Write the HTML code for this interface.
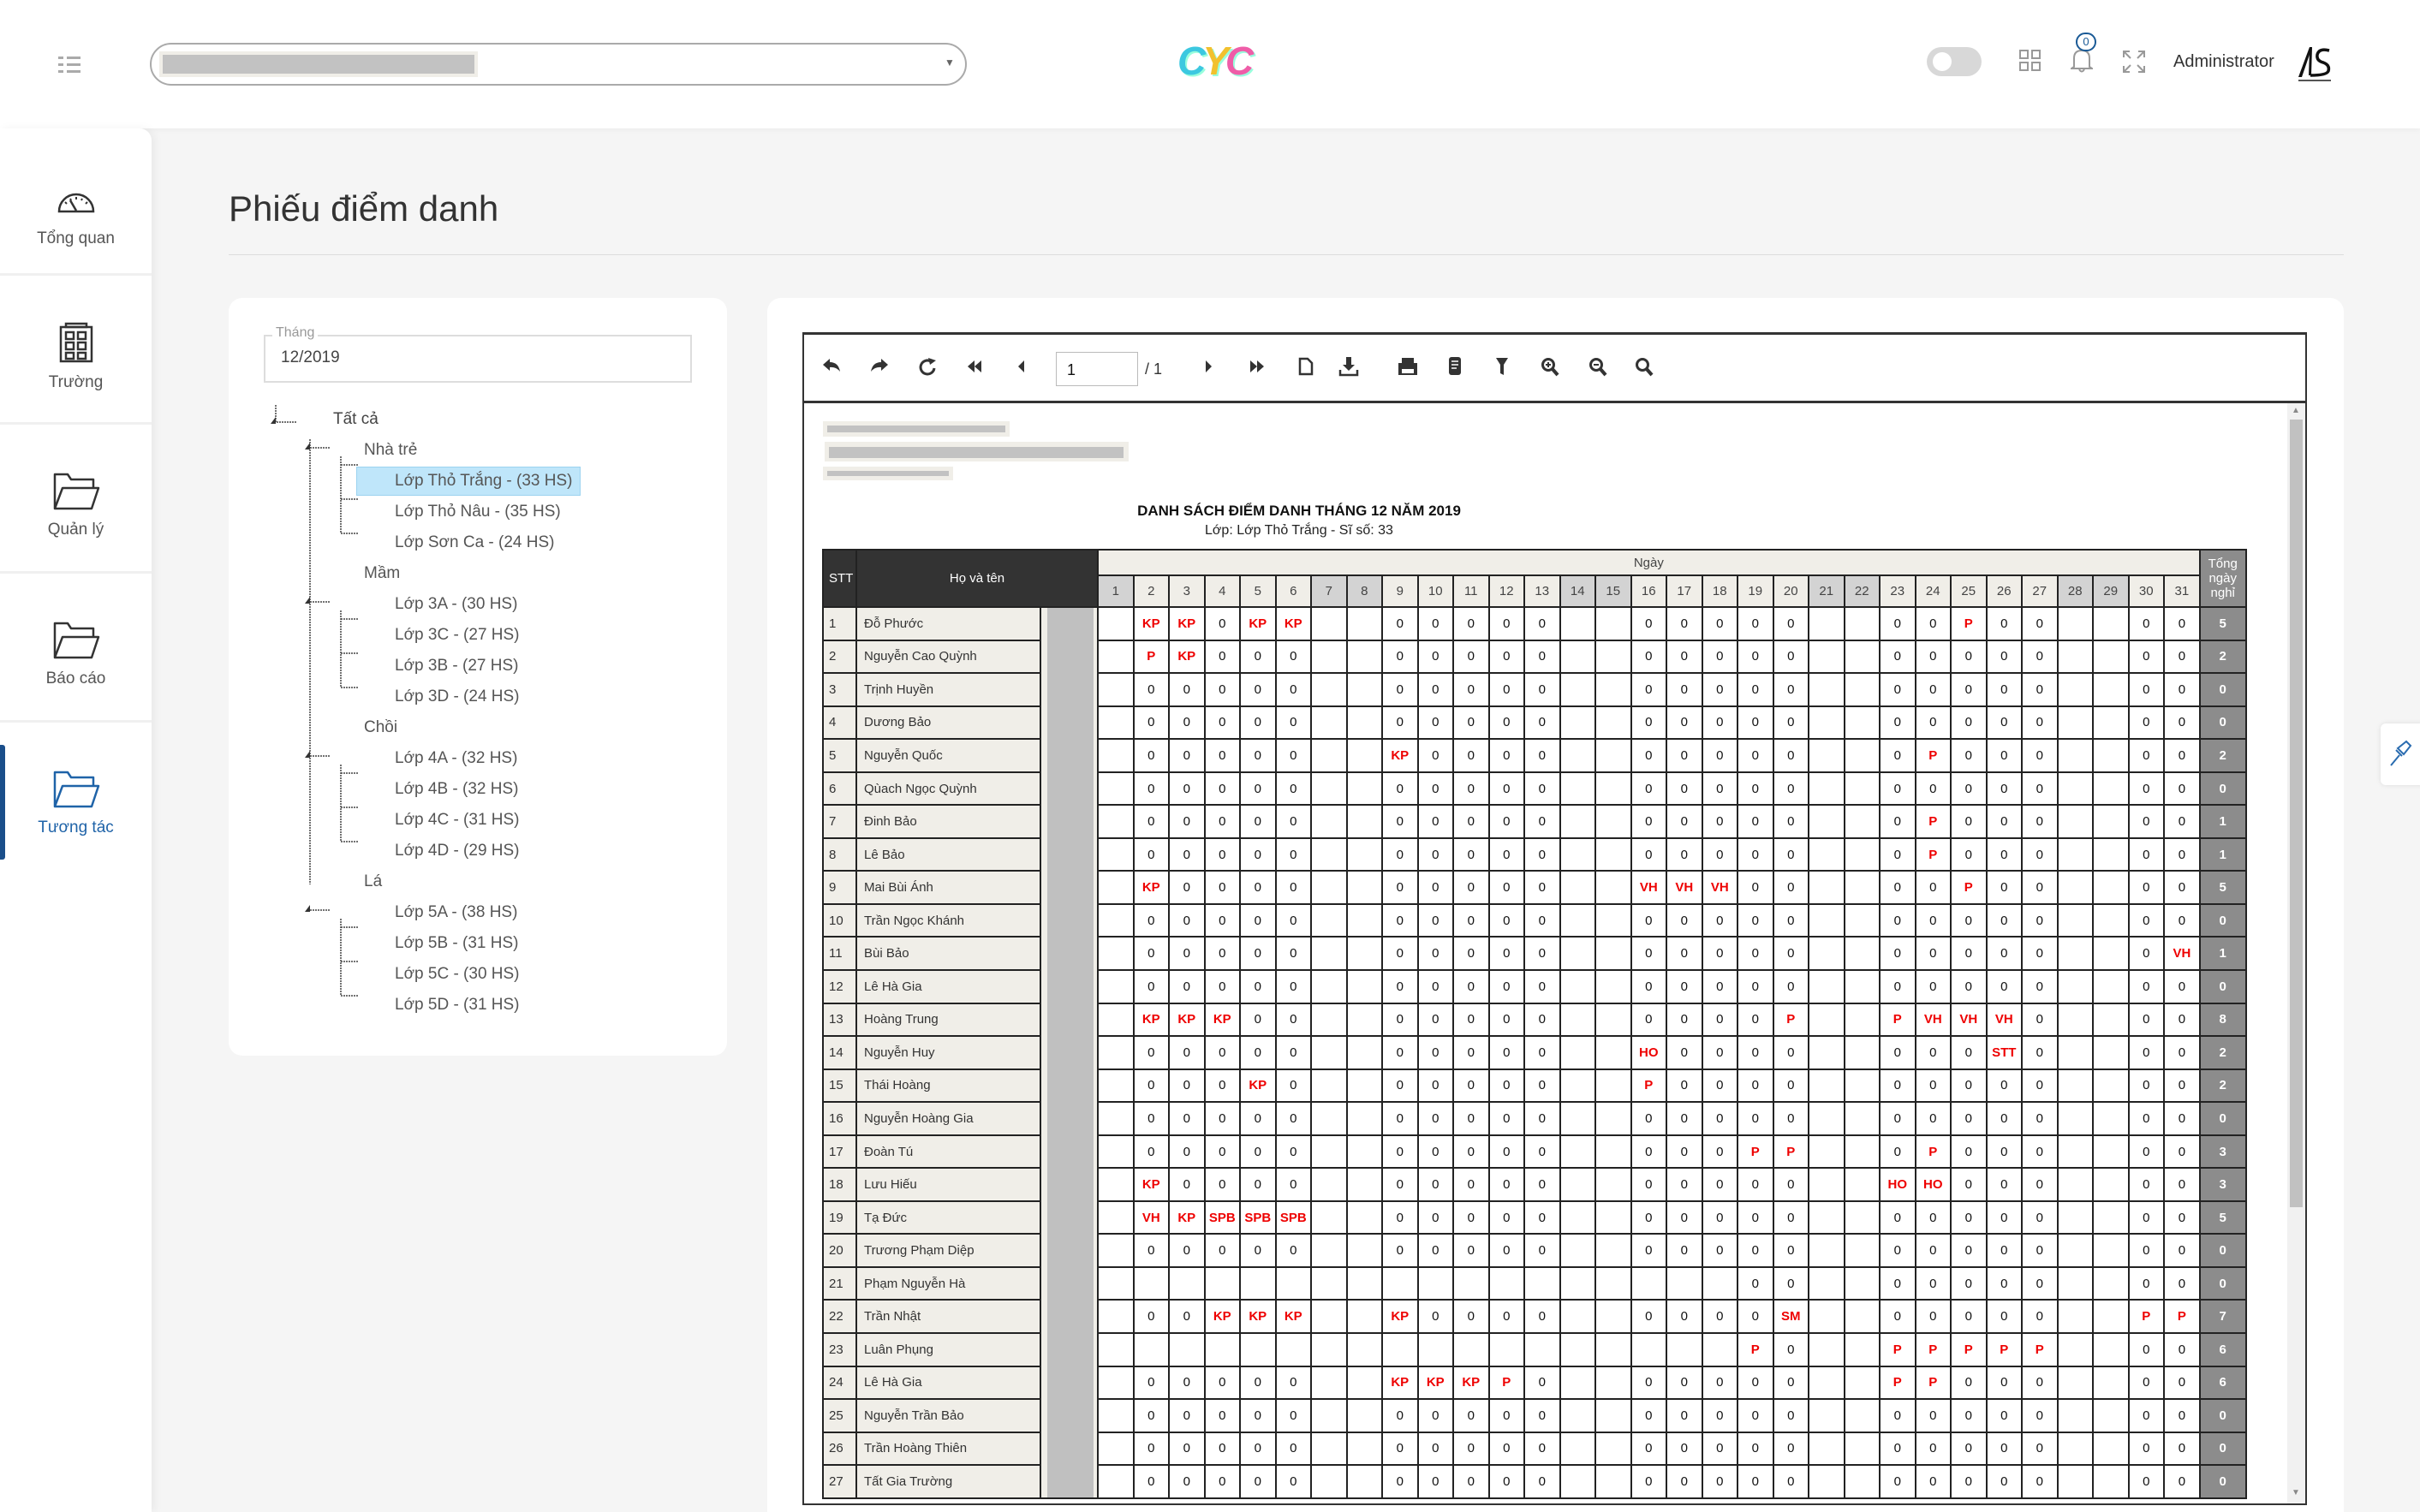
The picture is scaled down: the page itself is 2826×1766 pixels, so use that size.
<!DOCTYPE html>
<html><head><meta charset="utf-8">
<style>
*{box-sizing:border-box;margin:0;padding:0}
html,body{width:2826px;height:1766px;overflow:hidden;background:#f5f5f5;font-family:"Liberation Sans",sans-serif;position:relative}
.abs{position:absolute}
#hdr{left:0;top:0;width:2826px;height:150px;background:#fff;box-shadow:0 2px 6px rgba(0,0,0,.04)}
#side{left:0;top:150px;width:177px;height:1616px;background:#fff;border-top-right-radius:14px;box-shadow:4px 0 10px rgba(0,0,0,.05)}
.si{position:absolute;left:0;width:177px;height:172px;border-bottom:3px solid #f0f0f0;text-align:center;color:#555;font-size:19px}
.si svg{display:block;margin:0 auto}
.title{left:267px;top:220px;font-size:42px;color:#333}
.card{background:#fff;border-radius:16px}
.tree div{position:absolute;font-size:19px;color:#555;white-space:nowrap}
table{border-collapse:collapse;table-layout:fixed;font-family:"Liberation Sans Narrow","Liberation Sans",sans-serif;font-size:15px;color:#111}
td{border:2px solid #222;text-align:center;height:38.55px;padding:0;overflow:hidden;white-space:nowrap}
td.s{background:#f0eee8;text-align:left;padding-left:6px;color:#333}
td.n{background:#f0eee8;text-align:left;padding-left:8px;color:#333}
td.sp{background:linear-gradient(to right,#f0eee8 7px,#c0c0c0 7px,#c0c0c0 61px,#f0eee8 61px);border-top:2px solid #222}
td.r{color:#e00;font-weight:bold}
td.t{background:#8c8c8c;color:#fff;font-weight:bold}
tr.h td{background:#333;color:#fff;height:30px}
td.ng{background:#f0eee8!important;color:#444!important}
tr.d td{height:37px;background:#f0eee8;color:#444}
tr.d td.w{background:#d3d3d3}
</style></head><body>

<div id="hdr" class="abs">
  <svg class="abs" style="left:68px;top:66px" width="36" height="20"><g fill="#aaa"><rect x="0" y="0" width="6" height="3"/><rect x="10" y="0" width="16" height="3"/><rect x="0" y="8" width="6" height="3"/><rect x="10" y="8" width="16" height="3"/><rect x="0" y="16" width="6" height="3"/><rect x="10" y="16" width="16" height="3"/></g></svg>
  <div class="abs" style="left:175px;top:50px;width:954px;height:50px;border:2px solid #aaa;border-radius:25px"></div>
  <div class="abs" style="left:186px;top:60px;width:372px;height:30px;background:#f0eee8"></div>
  <div class="abs" style="left:190px;top:64px;width:364px;height:22px;background:#c2c2c2"></div>
  <div class="abs" style="left:1103px;top:66px;font-size:12px;color:#666">▼</div>
  <div class="abs" style="left:1375px;top:44px;font-size:46px;font-weight:bold;font-style:italic;letter-spacing:-4px;text-shadow:2px 2px 0 #9fd"><span style="color:#3cc8e0">C</span><span style="color:#f2c12e">Y</span><span style="color:#ef5da8">C</span></div>
  <div class="abs" style="left:2250px;top:55px;width:64px;height:34px;border-radius:17px;background:#d8d8d8"></div>
  <div class="abs" style="left:2257px;top:61px;width:22px;height:22px;border-radius:11px;background:#fff"></div>
  <svg class="abs" style="left:2358px;top:58px" width="26" height="26"><g fill="none" stroke="#999" stroke-width="2"><rect x="1" y="1" width="9" height="9"/><rect x="15" y="1" width="9" height="9"/><rect x="1" y="15" width="9" height="9"/><rect x="15" y="15" width="9" height="9"/></g></svg>
  <svg class="abs" style="left:2418px;top:56px" width="26" height="30"><path d="M4 22 L4 12 Q4 3 13 3 Q22 3 22 12 L22 22 L25 24 L1 24 Z M10 25 Q13 30 16 25" fill="none" stroke="#999" stroke-width="2"/></svg>
  <div class="abs" style="left:2424px;top:38px;width:24px;height:22px;border:2px solid #1a5a96;border-radius:11px;background:#fff;font-size:13px;color:#1a5a96;text-align:center;line-height:18px">0</div>
  <svg class="abs" style="left:2478px;top:58px" width="28" height="28"><g fill="none" stroke="#999" stroke-width="2"><path d="M2 9V2H9M2 2L10 10M19 2H26V9M26 2L18 10M2 19V26H9M2 26L10 18M26 19V26H19M26 26L18 18"/></g></svg>
  <div class="abs" style="left:2538px;top:61px;font-size:20px;color:#333">Administrator</div>
  <svg class="abs" style="left:2682px;top:52px" width="46" height="46">
    <path d="M2 38 L15 3 L18 3 L6 38Z" fill="#111"/>
    <path d="M18 3 L18 3 L17 36 L14 36 L15 6Z" fill="#111"/>
    <path d="M38 7 Q26 4 24 12 Q23 19 31 21 Q39 24 37 31 Q35 36 16 36" fill="none" stroke="#111" stroke-width="3.5"/>
    <rect x="2" y="41" width="38" height="2" fill="#555"/>
  </svg>
</div>

<div id="side" class="abs">
  <div class="si" style="top:0"><svg style="margin-top:72px" width="46" height="28"><path d="M3 25 A20 20 0 0 1 43 25 Z" fill="none" stroke="#333" stroke-width="2.5"/><path d="M23 24 L16 12" stroke="#333" stroke-width="2.5"/><g stroke="#333" stroke-width="2"><path d="M10 14L12 16M23 8V11M36 14L34 16M16 10L17 12M30 10L29 12"/></g></svg><div style="margin-top:18px">Tổng quan</div></div>
  <div class="si" style="top:174px"><svg style="margin-top:52px" width="40" height="48"><g fill="none" stroke="#333" stroke-width="2.5"><rect x="2" y="6" width="36" height="40"/><rect x="8" y="2" width="24" height="4"/><rect x="8" y="12" width="9" height="8"/><rect x="22" y="12" width="9" height="8"/><rect x="8" y="24" width="9" height="8"/><rect x="22" y="24" width="9" height="8"/><rect x="8" y="36" width="9" height="7"/><rect x="22" y="36" width="9" height="7"/></g></svg><div style="margin-top:12px">Trường</div></div>
  <div class="si" style="top:348px"><svg style="margin-top:50px" width="56" height="50"><path d="M3 46 V6 H18 L22 12 H48 V22 M3 46 L12 22 H54 L46 46 Z" fill="none" stroke="#333" stroke-width="2.5" stroke-linejoin="round"/></svg><div style="margin-top:10px">Quản lý</div></div>
  <div class="si" style="top:522px"><svg style="margin-top:50px" width="56" height="50"><path d="M3 46 V6 H18 L22 12 H48 V22 M3 46 L12 22 H54 L46 46 Z" fill="none" stroke="#333" stroke-width="2.5" stroke-linejoin="round"/></svg><div style="margin-top:10px">Báo cáo</div></div>
  <div class="si" style="top:696px;color:#1f63a8;border:none"><svg style="margin-top:50px" width="56" height="50"><path d="M3 46 V6 H18 L22 12 H48 V22 M3 46 L12 22 H54 L46 46 Z" fill="none" stroke="#1f63a8" stroke-width="2.5" stroke-linejoin="round"/></svg><div style="margin-top:10px">Tương tác</div></div>
  <div class="abs" style="left:0;top:720px;width:6px;height:134px;background:#1a4e8a;border-radius:0 3px 3px 0"></div>
</div>

<div class="abs title">Phiếu điểm danh</div>
<div class="abs" style="left:267px;top:297px;width:2470px;height:1px;background:#ddd"></div>

<div class="abs card" style="left:267px;top:348px;width:582px;height:885px"></div>
<div class="abs" style="left:308px;top:391px;width:500px;height:56px;border:2px solid #ddd"></div>
<div class="abs" style="left:318px;top:380px;background:#fff;padding:0 4px;font-size:16px;color:#999">Tháng</div>
<div class="abs" style="left:328px;top:407px;font-size:19px;color:#444">12/2019</div>

<div class="tree">
  <div style="left:389px;top:479px;color:#444">Tất cả</div>
  <div style="left:425px;top:515px">Nhà trẻ</div>
  <div style="left:416px;top:545px;width:262px;height:34px;background:#bfe6fa;border:1px solid #9cd3f0"></div>
  <div style="left:461px;top:551px">Lớp Thỏ Trắng - (33 HS)</div>
  <div style="left:461px;top:587px">Lớp Thỏ Nâu - (35 HS)</div>
  <div style="left:461px;top:623px">Lớp Sơn Ca - (24 HS)</div>
  <div style="left:425px;top:659px">Mầm</div>
  <div style="left:461px;top:695px">Lớp 3A - (30 HS)</div>
  <div style="left:461px;top:731px">Lớp 3C - (27 HS)</div>
  <div style="left:461px;top:767px">Lớp 3B - (27 HS)</div>
  <div style="left:461px;top:803px">Lớp 3D - (24 HS)</div>
  <div style="left:425px;top:839px">Chồi</div>
  <div style="left:461px;top:875px">Lớp 4A - (32 HS)</div>
  <div style="left:461px;top:911px">Lớp 4B - (32 HS)</div>
  <div style="left:461px;top:947px">Lớp 4C - (31 HS)</div>
  <div style="left:461px;top:983px">Lớp 4D - (29 HS)</div>
  <div style="left:425px;top:1019px">Lá</div>
  <div style="left:461px;top:1055px">Lớp 5A - (38 HS)</div>
  <div style="left:461px;top:1091px">Lớp 5B - (31 HS)</div>
  <div style="left:461px;top:1127px">Lớp 5C - (30 HS)</div>
  <div style="left:461px;top:1163px">Lớp 5D - (31 HS)</div>
</div>
<svg class="abs" style="left:310px;top:473px" width="200" height="720">
  <g stroke="#444" stroke-width="1.5" stroke-dasharray="2 1" fill="none">
    <path d="M12 0V20H36"/>
    <path d="M52 40V560"/>
    <path d="M52 50H76M52 230H76M52 410H76M52 590H76"/>
    <path d="M88 60V150M88 70H108M88 110H108M88 150H108"/>
    <path d="M88 240V330M88 250H108M88 290H108M88 330H108"/>
    <path d="M88 420V510M88 430H108M88 470H108M88 510H108"/>
    <path d="M88 600V690M88 610H108M88 650H108M88 690H108"/>
  </g>
  <g fill="#333"><path d="M6 22L12 14L12 22Z"/><path d="M46 52L52 44L52 52Z"/><path d="M46 232L52 224L52 232Z"/><path d="M46 412L52 404L52 412Z"/><path d="M46 592L52 584L52 592Z"/></g>
</svg>

<div class="abs card" style="left:896px;top:348px;width:1841px;height:1440px"></div>
<div class="abs" style="left:937px;top:388px;width:1757px;height:1370px;border-left:2px solid #333;border-right:2px solid #333;border-bottom:2px solid #333"></div>
<div class="abs" style="left:937px;top:388px;width:1757px;height:3px;background:#333"></div>
<div class="abs" style="left:937px;top:468px;width:1757px;height:3px;background:#333"></div>
<div class="abs" style="left:2671px;top:471px;width:21px;height:1285px;background:#f1f1f1"></div>
<div class="abs" style="left:2674px;top:490px;width:15px;height:920px;background:#c1c1c1"></div>
<div class="abs" style="left:2676px;top:474px;font-size:10px;color:#888">▲</div>
<div class="abs" style="left:2676px;top:1738px;font-size:10px;color:#888">▼</div>

<svg class="abs" style="left:955px;top:412px" width="1000" height="34">
 <g fill="#333">
  <path d="M6 14 L14 7 V11 Q24 11 26 22 Q21 16 14 17 V21Z"/>
  <path d="M82 14 L74 7 V11 Q64 11 62 22 Q67 16 74 17 V21Z"/>
  <path d="M132 10 A8 8 0 1 0 136 18" fill="none" stroke="#333" stroke-width="3"/><path d="M129 6 L138 9 L131 14Z"/>
  <path d="M175 16 L183 9 V23Z M183 16 L191 9 V23Z"/>
  <path d="M234 16 L241 9 V23Z"/>
  <path d="M453 9 L460 16 L453 23Z"/>
  <path d="M505 9 L513 16 L505 23Z M513 9 L521 16 L513 23Z"/>
  <path d="M563 7 H572 L577 12 V25 H563Z" fill="none" stroke="#333" stroke-width="2.5"/>
  <path d="M617 5 H623 V14 H627 L620 21 L613 14 H617Z"/><path d="M610 20V26H630V20" fill="none" stroke="#333" stroke-width="2.5"/>
  <path d="M682 12 V6 H696 V12 H700 V26 H678 V12Z M682 19 H696 V24 H682Z" fill-rule="evenodd"/>
  <rect x="737" y="5" width="14" height="21" rx="3"/><path d="M740 10H748M740 14H748M740 18H746" stroke="#fff" stroke-width="1.5"/>
  <path d="M792 6 H806 L801 14 V26 L797 24 V14Z"/>
  <circle cx="853" cy="14" r="6.5" fill="none" stroke="#333" stroke-width="3"/><path d="M857 18 L864 26" stroke="#333" stroke-width="4"/><path d="M850 14H856M853 11V17" stroke="#333" stroke-width="2"/>
  <circle cx="909" cy="14" r="6.5" fill="none" stroke="#333" stroke-width="3"/><path d="M913 18 L920 26" stroke="#333" stroke-width="4"/><path d="M906 14H912" stroke="#333" stroke-width="2"/>
  <circle cx="963" cy="14" r="6.5" fill="none" stroke="#333" stroke-width="3"/><path d="M967 18 L974 26" stroke="#333" stroke-width="4"/>
 </g>
</svg>
<div class="abs" style="left:1233px;top:411px;width:96px;height:40px;border:1px solid #bbb;background:#fff;font-size:18px;padding:10px 0 0 12px;color:#111">1</div>
<div class="abs" style="left:1337px;top:421px;font-size:18px;color:#333">/ 1</div>

<div class="abs" style="left:961px;top:492px;width:218px;height:18px;background:#f0eee8"></div>
<div class="abs" style="left:966px;top:497px;width:208px;height:8px;background:#c2c2c2"></div>
<div class="abs" style="left:963px;top:516px;width:355px;height:23px;background:#f0eee8"></div>
<div class="abs" style="left:968px;top:522px;width:344px;height:13px;background:#c2c2c2"></div>
<div class="abs" style="left:961px;top:545px;width:152px;height:16px;background:#f0eee8"></div>
<div class="abs" style="left:966px;top:550px;width:142px;height:6px;background:#c2c2c2"></div>

<div class="abs" style="left:1200px;top:587px;width:634px;text-align:center;font-family:'Liberation Sans Narrow','Liberation Sans',sans-serif;font-size:17px;font-weight:bold;color:#111">DANH SÁCH ĐIỂM DANH THÁNG 12 NĂM 2019</div>
<div class="abs" style="left:1200px;top:611px;width:634px;text-align:center;font-family:'Liberation Sans Narrow','Liberation Sans',sans-serif;font-size:16px;color:#222">Lớp: Lớp Thỏ Trắng - Sĩ số: 33</div>

<table class="abs" style="left:960px;top:641px;width:1662px">
<colgroup><col style="width:39px"><col style="width:215px"><col style="width:67px">
<col span="31" style="width:41.5px"><col style="width:54px"></colgroup>
<tr class="h"><td rowspan="2" style="text-align:left;padding-left:6px">STT<td colspan="2" rowspan="2">Họ và tên<td colspan="31" class="ng">Ngày<td rowspan="2" style="background:#8c8c8c;line-height:17px;white-space:normal">Tổng ngày nghỉ</tr>
<tr class="d"><td class="w">1<td>2<td>3<td>4<td>5<td>6<td class="w">7<td class="w">8<td>9<td>10<td>11<td>12<td>13<td class="w">14<td class="w">15<td>16<td>17<td>18<td>19<td>20<td class="w">21<td class="w">22<td>23<td>24<td>25<td>26<td>27<td class="w">28<td class="w">29<td>30<td>31</tr>
<tr><td class="s">1<td class="n">Đỗ Phước<td class="sp" rowspan="27"><td><td class="r">KP<td class="r">KP<td>0<td class="r">KP<td class="r">KP<td><td><td>0<td>0<td>0<td>0<td>0<td><td><td>0<td>0<td>0<td>0<td>0<td><td><td>0<td>0<td class="r">P<td>0<td>0<td><td><td>0<td>0<td class="t">5</tr>
<tr><td class="s">2<td class="n">Nguyễn Cao Quỳnh<td><td class="r">P<td class="r">KP<td>0<td>0<td>0<td><td><td>0<td>0<td>0<td>0<td>0<td><td><td>0<td>0<td>0<td>0<td>0<td><td><td>0<td>0<td>0<td>0<td>0<td><td><td>0<td>0<td class="t">2</tr>
<tr><td class="s">3<td class="n">Trịnh Huyền<td><td>0<td>0<td>0<td>0<td>0<td><td><td>0<td>0<td>0<td>0<td>0<td><td><td>0<td>0<td>0<td>0<td>0<td><td><td>0<td>0<td>0<td>0<td>0<td><td><td>0<td>0<td class="t">0</tr>
<tr><td class="s">4<td class="n">Dương Bảo<td><td>0<td>0<td>0<td>0<td>0<td><td><td>0<td>0<td>0<td>0<td>0<td><td><td>0<td>0<td>0<td>0<td>0<td><td><td>0<td>0<td>0<td>0<td>0<td><td><td>0<td>0<td class="t">0</tr>
<tr><td class="s">5<td class="n">Nguyễn Quốc<td><td>0<td>0<td>0<td>0<td>0<td><td><td class="r">KP<td>0<td>0<td>0<td>0<td><td><td>0<td>0<td>0<td>0<td>0<td><td><td>0<td class="r">P<td>0<td>0<td>0<td><td><td>0<td>0<td class="t">2</tr>
<tr><td class="s">6<td class="n">Qùach Ngọc Quỳnh<td><td>0<td>0<td>0<td>0<td>0<td><td><td>0<td>0<td>0<td>0<td>0<td><td><td>0<td>0<td>0<td>0<td>0<td><td><td>0<td>0<td>0<td>0<td>0<td><td><td>0<td>0<td class="t">0</tr>
<tr><td class="s">7<td class="n">Đinh Bảo<td><td>0<td>0<td>0<td>0<td>0<td><td><td>0<td>0<td>0<td>0<td>0<td><td><td>0<td>0<td>0<td>0<td>0<td><td><td>0<td class="r">P<td>0<td>0<td>0<td><td><td>0<td>0<td class="t">1</tr>
<tr><td class="s">8<td class="n">Lê Bảo<td><td>0<td>0<td>0<td>0<td>0<td><td><td>0<td>0<td>0<td>0<td>0<td><td><td>0<td>0<td>0<td>0<td>0<td><td><td>0<td class="r">P<td>0<td>0<td>0<td><td><td>0<td>0<td class="t">1</tr>
<tr><td class="s">9<td class="n">Mai Bùi Ánh<td><td class="r">KP<td>0<td>0<td>0<td>0<td><td><td>0<td>0<td>0<td>0<td>0<td><td><td class="r">VH<td class="r">VH<td class="r">VH<td>0<td>0<td><td><td>0<td>0<td class="r">P<td>0<td>0<td><td><td>0<td>0<td class="t">5</tr>
<tr><td class="s">10<td class="n">Trần Ngọc Khánh<td><td>0<td>0<td>0<td>0<td>0<td><td><td>0<td>0<td>0<td>0<td>0<td><td><td>0<td>0<td>0<td>0<td>0<td><td><td>0<td>0<td>0<td>0<td>0<td><td><td>0<td>0<td class="t">0</tr>
<tr><td class="s">11<td class="n">Bùi Bảo<td><td>0<td>0<td>0<td>0<td>0<td><td><td>0<td>0<td>0<td>0<td>0<td><td><td>0<td>0<td>0<td>0<td>0<td><td><td>0<td>0<td>0<td>0<td>0<td><td><td>0<td class="r">VH<td class="t">1</tr>
<tr><td class="s">12<td class="n">Lê Hà Gia<td><td>0<td>0<td>0<td>0<td>0<td><td><td>0<td>0<td>0<td>0<td>0<td><td><td>0<td>0<td>0<td>0<td>0<td><td><td>0<td>0<td>0<td>0<td>0<td><td><td>0<td>0<td class="t">0</tr>
<tr><td class="s">13<td class="n">Hoàng Trung<td><td class="r">KP<td class="r">KP<td class="r">KP<td>0<td>0<td><td><td>0<td>0<td>0<td>0<td>0<td><td><td>0<td>0<td>0<td>0<td class="r">P<td><td><td class="r">P<td class="r">VH<td class="r">VH<td class="r">VH<td>0<td><td><td>0<td>0<td class="t">8</tr>
<tr><td class="s">14<td class="n">Nguyễn Huy<td><td>0<td>0<td>0<td>0<td>0<td><td><td>0<td>0<td>0<td>0<td>0<td><td><td class="r">HO<td>0<td>0<td>0<td>0<td><td><td>0<td>0<td>0<td class="r">STT<td>0<td><td><td>0<td>0<td class="t">2</tr>
<tr><td class="s">15<td class="n">Thái Hoàng<td><td>0<td>0<td>0<td class="r">KP<td>0<td><td><td>0<td>0<td>0<td>0<td>0<td><td><td class="r">P<td>0<td>0<td>0<td>0<td><td><td>0<td>0<td>0<td>0<td>0<td><td><td>0<td>0<td class="t">2</tr>
<tr><td class="s">16<td class="n">Nguyễn Hoàng Gia<td><td>0<td>0<td>0<td>0<td>0<td><td><td>0<td>0<td>0<td>0<td>0<td><td><td>0<td>0<td>0<td>0<td>0<td><td><td>0<td>0<td>0<td>0<td>0<td><td><td>0<td>0<td class="t">0</tr>
<tr><td class="s">17<td class="n">Đoàn Tú<td><td>0<td>0<td>0<td>0<td>0<td><td><td>0<td>0<td>0<td>0<td>0<td><td><td>0<td>0<td>0<td class="r">P<td class="r">P<td><td><td>0<td class="r">P<td>0<td>0<td>0<td><td><td>0<td>0<td class="t">3</tr>
<tr><td class="s">18<td class="n">Lưu Hiếu<td><td class="r">KP<td>0<td>0<td>0<td>0<td><td><td>0<td>0<td>0<td>0<td>0<td><td><td>0<td>0<td>0<td>0<td>0<td><td><td class="r">HO<td class="r">HO<td>0<td>0<td>0<td><td><td>0<td>0<td class="t">3</tr>
<tr><td class="s">19<td class="n">Tạ Đức<td><td class="r">VH<td class="r">KP<td class="r">SPB<td class="r">SPB<td class="r">SPB<td><td><td>0<td>0<td>0<td>0<td>0<td><td><td>0<td>0<td>0<td>0<td>0<td><td><td>0<td>0<td>0<td>0<td>0<td><td><td>0<td>0<td class="t">5</tr>
<tr><td class="s">20<td class="n">Trương Phạm Diệp<td><td>0<td>0<td>0<td>0<td>0<td><td><td>0<td>0<td>0<td>0<td>0<td><td><td>0<td>0<td>0<td>0<td>0<td><td><td>0<td>0<td>0<td>0<td>0<td><td><td>0<td>0<td class="t">0</tr>
<tr><td class="s">21<td class="n">Phạm Nguyễn Hà<td><td><td><td><td><td><td><td><td><td><td><td><td><td><td><td><td><td><td>0<td>0<td><td><td>0<td>0<td>0<td>0<td>0<td><td><td>0<td>0<td class="t">0</tr>
<tr><td class="s">22<td class="n">Trần Nhật<td><td>0<td>0<td class="r">KP<td class="r">KP<td class="r">KP<td><td><td class="r">KP<td>0<td>0<td>0<td>0<td><td><td>0<td>0<td>0<td>0<td class="r">SM<td><td><td>0<td>0<td>0<td>0<td>0<td><td><td class="r">P<td class="r">P<td class="t">7</tr>
<tr><td class="s">23<td class="n">Luân Phụng<td><td><td><td><td><td><td><td><td><td><td><td><td><td><td><td><td><td><td class="r">P<td>0<td><td><td class="r">P<td class="r">P<td class="r">P<td class="r">P<td class="r">P<td><td><td>0<td>0<td class="t">6</tr>
<tr><td class="s">24<td class="n">Lê Hà Gia<td><td>0<td>0<td>0<td>0<td>0<td><td><td class="r">KP<td class="r">KP<td class="r">KP<td class="r">P<td>0<td><td><td>0<td>0<td>0<td>0<td>0<td><td><td class="r">P<td class="r">P<td>0<td>0<td>0<td><td><td>0<td>0<td class="t">6</tr>
<tr><td class="s">25<td class="n">Nguyễn Trần Bảo<td><td>0<td>0<td>0<td>0<td>0<td><td><td>0<td>0<td>0<td>0<td>0<td><td><td>0<td>0<td>0<td>0<td>0<td><td><td>0<td>0<td>0<td>0<td>0<td><td><td>0<td>0<td class="t">0</tr>
<tr><td class="s">26<td class="n">Trần Hoàng Thiên<td><td>0<td>0<td>0<td>0<td>0<td><td><td>0<td>0<td>0<td>0<td>0<td><td><td>0<td>0<td>0<td>0<td>0<td><td><td>0<td>0<td>0<td>0<td>0<td><td><td>0<td>0<td class="t">0</tr>
<tr><td class="s">27<td class="n">Tất Gia Trường<td><td>0<td>0<td>0<td>0<td>0<td><td><td>0<td>0<td>0<td>0<td>0<td><td><td>0<td>0<td>0<td>0<td>0<td><td><td>0<td>0<td>0<td>0<td>0<td><td><td>0<td>0<td class="t">0</tr>
</table>

<div class="abs" style="left:2780px;top:845px;width:50px;height:72px;background:#fff;border-radius:6px 0 0 6px;box-shadow:0 0 6px rgba(0,0,0,.1)"></div>
<svg class="abs" style="left:2788px;top:862px" width="30" height="36"><path d="M4 32 L14 20 M12 12 L22 4 L27 9 L19 19 Z M10 14 L17 21" fill="none" stroke="#2a6cb0" stroke-width="2"/></svg>
</body></html>
